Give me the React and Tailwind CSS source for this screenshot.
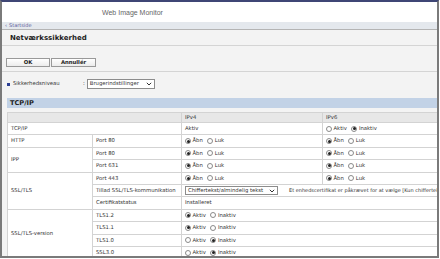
import React from 'react';

const body = "font-['DejaVu_Sans',Verdana,sans-serif]";

function Chevron() {
  return (
    <svg width="6" height="4" viewBox="0 0 6 4" className="shrink-0">
      <path d="M0.8 0.8 L3 3 L5.2 0.8" fill="none" stroke="#333" strokeWidth="1" />
    </svg>
  );
}

function Radio({ on }) {
  return (
    <span className="inline-flex items-center justify-center w-[6px] h-[6px] rounded-full border border-[#8a8a8a] bg-white shrink-0">
      {on && <span className="w-[3px] h-[3px] rounded-full bg-[#222]" />}
    </span>
  );
}

function RadioPair({ a, b, value }) {
  return (
    <div className="flex items-center gap-[1.5px]">
      <Radio on={value === 0} />
      <span>{a}</span>
      <span className="w-[1.5px]" />
      <Radio on={value === 1} />
      <span>{b}</span>
    </div>
  );
}

function Cell({ className = '', children }) {
  return (
    <div className={`bg-white flex items-center pl-[3px] whitespace-nowrap overflow-hidden ${className}`}>
      {children}
    </div>
  );
}

export default function App() {
  return (
    <div className="w-[440px] h-[259px] bg-white overflow-hidden">
      <div className={`w-[439px] h-[258px] flex flex-col border-t-2 border-t-[#3f4675] border-x-2 border-b-2 border-[#7a7a7a] overflow-hidden ${body} text-[5.3px] leading-none text-[#333]`}>
        {/* header */}
        <div className="h-[20px] shrink-0 bg-white flex items-center pl-[100px] pt-[1px]">
          <span className="font-['Liberation_Sans',Arial,sans-serif] text-[7px] text-[#666]">Web Image Monitor</span>
        </div>
        <div className="h-[8px] shrink-0 bg-[#e4e8ed] border-b border-[#b4b4b4] flex items-center pl-[3px] text-[#5b5b9c] text-[5px]">
          <span className="mr-[2px]">‹</span>Startside
        </div>

        <div className="flex-1 bg-[#f3f3f3] flex flex-col">
          <div className="h-[16px] shrink-0 border-b border-[#d4d4d4] flex items-center pl-[8px] pt-[1px]">
            <span className="font-bold text-[7px] text-[#222]">Netværkssikkerhed</span>
          </div>
          <div className="h-[26px] shrink-0 border-b border-[#d4d4d4] flex items-end pb-[4px] pl-[4px] gap-px">
            <button className="w-[44px] h-[9px] border border-[#999] bg-gradient-to-b from-white to-[#ececec] font-bold text-[5.3px] text-[#222]">OK</button>
            <button className="w-[45px] h-[9px] border border-[#999] bg-gradient-to-b from-white to-[#ececec] font-bold text-[5.3px] text-[#222]">Annullér</button>
          </div>

          <div className="h-[26px] shrink-0 flex items-center pl-[5px] pb-[2px]">
            <span className="w-[3px] h-[3px] bg-[#2b3f93] mr-[3px]" />
            <span className="w-[70px]">Sikkerhedsniveau</span>
            <span className="mr-[2px]">:</span>
            <div className="w-[68px] h-[10px] border border-[#8c8c8c] bg-white flex items-center justify-between px-[2px]">
              <span>Brugerindstillinger</span>
              <Chevron />
            </div>
          </div>

          <div className="h-[10px] shrink-0 ml-[5px] bg-[#c2d2e6] flex items-center pl-[3px]">
            <span className="font-bold text-[6.6px] text-[#222]">TCP/IP</span>
          </div>

          <div className="ml-[5px] mt-[4px] grid grid-cols-[84px_88px_140px_150px] grid-rows-[9px_repeat(11,11.4px)] gap-px bg-[#d3d3d3] p-px w-max">
            <Cell className="col-span-2 bg-[#e7e7e7]!" />
            <Cell className="bg-[#e7e7e7]! pl-[2px]">IPv4</Cell>
            <Cell className="bg-[#e7e7e7]! pl-[2px]">IPv6</Cell>

            <Cell className="col-span-2">TCP/IP</Cell>
            <Cell className="pl-[2px]">Aktiv</Cell>
            <Cell className="pl-[1px]"><RadioPair a="Aktiv" b="Inaktiv" value={1} /></Cell>

            <Cell>HTTP</Cell>
            <Cell>Port 80</Cell>
            <Cell className="pl-[1px]"><RadioPair a="Åbn" b="Luk" value={0} /></Cell>
            <Cell className="pl-[1px]"><RadioPair a="Åbn" b="Luk" value={0} /></Cell>

            <Cell className="row-span-2">IPP</Cell>
            <Cell>Port 80</Cell>
            <Cell className="pl-[1px]"><RadioPair a="Åbn" b="Luk" value={0} /></Cell>
            <Cell className="pl-[1px]"><RadioPair a="Åbn" b="Luk" value={0} /></Cell>
            <Cell>Port 631</Cell>
            <Cell className="pl-[1px]"><RadioPair a="Åbn" b="Luk" value={0} /></Cell>
            <Cell className="pl-[1px]"><RadioPair a="Åbn" b="Luk" value={0} /></Cell>

            <Cell className="row-span-3">SSL/TLS</Cell>
            <Cell>Port 443</Cell>
            <Cell className="pl-[1px]"><RadioPair a="Åbn" b="Luk" value={0} /></Cell>
            <Cell className="pl-[1px]"><RadioPair a="Åbn" b="Luk" value={0} /></Cell>
            <Cell>Tillad SSL/TLS-kommunikation</Cell>
            <Cell className="col-span-2 pl-[1px]">
              <div className="w-[93px] h-[9px] border border-[#8c8c8c] bg-white flex items-center justify-between px-[2px] shrink-0">
                <span>Chiffertekst/almindelig tekst</span>
                <Chevron />
              </div>
              <span className="ml-[11px] text-[5px]">Et enhedscertifikat er påkrævet for at vælge [Kun chiffertekst].</span>
            </Cell>
            <Cell>Certifikatstatus</Cell>
            <Cell className="col-span-2 pl-[2px]">Installeret</Cell>

            <Cell className="row-span-4">SSL/TLS-version</Cell>
            <Cell>TLS1.2</Cell>
            <Cell className="col-span-2 pl-[1px]"><RadioPair a="Aktiv" b="Inaktiv" value={0} /></Cell>
            <Cell>TLS1.1</Cell>
            <Cell className="col-span-2 pl-[1px]"><RadioPair a="Aktiv" b="Inaktiv" value={0} /></Cell>
            <Cell>TLS1.0</Cell>
            <Cell className="col-span-2 pl-[1px]"><RadioPair a="Aktiv" b="Inaktiv" value={1} /></Cell>
            <Cell>SSL3.0</Cell>
            <Cell className="col-span-2 pl-[1px]"><RadioPair a="Aktiv" b="Inaktiv" value={1} /></Cell>
          </div>
        </div>
      </div>
    </div>
  );
}
